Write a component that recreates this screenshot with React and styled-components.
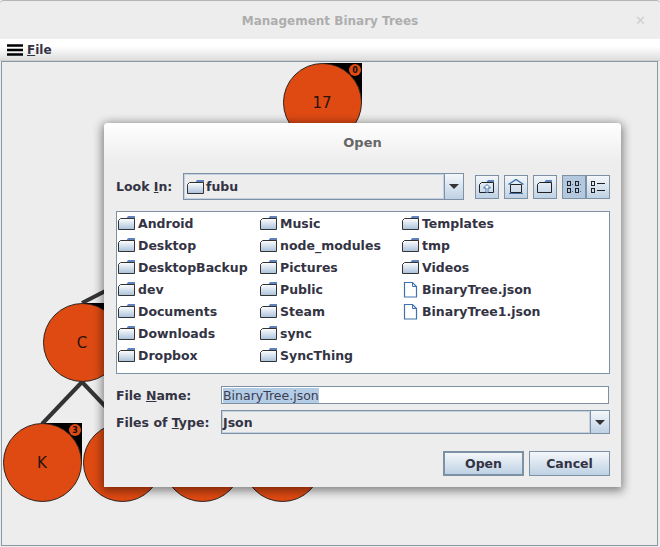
import styled, { createGlobalStyle } from "styled-components";

const GlobalStyle = createGlobalStyle`
  html, body { margin: 0; padding: 0; background: #ededed; }
  * { box-sizing: border-box; }
  body { font-family: "DejaVu Sans", sans-serif; }
`;

const Window = styled.div`
  width: 660px;
  height: 547px;
  display: flex;
  flex-direction: column;
  background: #ededed;
  border-top: 1px solid #b4b4b4;
  border-radius: 4px 4px 0 0;
  overflow: hidden;
  position: relative;
`;

const TitleBar = styled.div`
  height: 38px;
  flex: none;
  display: flex;
  align-items: center;
  justify-content: center;
  position: relative;
  padding-top: 1px;
  font-size: 12px;
  font-weight: bold;
  color: #adadad;
`;

const CloseMark = styled.span`
  position: absolute;
  right: 14px;
  top: 12px;
  font-size: 13px;
  color: #cfcfcf;
`;

const MenuBar = styled.div`
  height: 22px;
  flex: none;
  display: flex;
  align-items: center;
  gap: 4px;
  padding: 0 7px;
  background: linear-gradient(#ffffff 35%, #dedede);
  border-bottom: 1px solid #cfcfcf;
  font-size: 12px;
  font-weight: bold;
  color: #333344;
`;

const Canvas = styled.div`
  flex: 1;
  margin: 0 2px 1px 1px;
  border: 1px solid #8a98a5;
  position: relative;
  background: #ededed;
`;

const Edges = styled.svg`
  position: absolute;
  left: -2px;
  top: -62px;
`;

const Node = styled.div`
  position: absolute;
  left: ${p => p.$x - 2}px;
  top: ${p => p.$y - 62}px;
  width: 79px;
  height: 79px;
`;

const Corner = styled.div`
  position: absolute;
  right: 0;
  top: 0;
  width: 50%;
  height: 50%;
  background: #000;
`;

const Disc = styled.div`
  position: absolute;
  inset: 0;
  border-radius: 50%;
  background: #df4a13;
  border: 1.5px solid #2b2320;
  display: flex;
  align-items: center;
  justify-content: center;
  padding-right: 1px;
  font-size: 15px;
  color: #2a1208;
`;

const Badge = styled.div`
  position: absolute;
  right: 1px;
  top: 1px;
  width: 12px;
  height: 12px;
  border-radius: 50%;
  background: #df4a13;
  color: #111;
  font-size: 8px;
  font-weight: bold;
  display: flex;
  align-items: center;
  justify-content: center;
`;

const Dialog = styled.div`
  position: absolute;
  left: 104px;
  top: 122px;
  width: 517px;
  height: 364px;
  background: #ededed;
  border-radius: 4px 4px 0 0;
  box-shadow: 0 2px 10px 2px rgba(0, 0, 0, 0.45);
  display: flex;
  flex-direction: column;
`;

const DialogTitle = styled.div`
  height: 40px;
  flex: none;
  border-radius: 4px 4px 0 0;
  background: linear-gradient(#ffffff, #ededed);
  display: flex;
  align-items: center;
  justify-content: center;
  padding-bottom: 2px;
  font-size: 13px;
  font-weight: bold;
  color: #666;
`;

const DialogBody = styled.div`
  flex: 1;
  padding: 10px 11px 11px 12px;
  display: flex;
  flex-direction: column;
  font-size: 12.5px;
  font-weight: bold;
  color: #333344;
`;

const LookRow = styled.div`
  display: flex;
  align-items: center;
  height: 27px;
`;

const Label = styled.label`
  flex: none;
  width: ${p => p.$w}px;
`;

const Combo = styled.div`
  display: flex;
  align-items: stretch;
  width: ${p => p.$w}px;
  height: ${p => p.$h}px;
  border: 1px solid #7e90a4;
  background: #ededed;
`;

const ComboValue = styled.div`
  flex: 1;
  display: flex;
  align-items: center;
  gap: 2px;
  padding-left: ${p => p.$pad}px;
  border: 1px solid #c3d2e2;
`;

const ComboArrow = styled.div`
  flex: none;
  width: 19px;
  display: flex;
  align-items: center;
  justify-content: center;
  border-left: 1px solid #7e90a4;
  background: linear-gradient(#f4f7fa, #bed1e4);
  &::after {
    content: "";
    border-left: 5px solid transparent;
    border-right: 5px solid transparent;
    border-top: 5px solid #333;
  }
`;

const Tools = styled.div`
  display: flex;
  margin-left: 11px;
  gap: 5px;
`;

const ToggleGroup = styled.div`
  display: flex;
`;

const ToolButton = styled.div`
  width: 24px;
  height: 24px;
  border: 1px solid #7e90a4;
  display: flex;
  align-items: center;
  justify-content: center;
  background: ${p => (p.$on ? "#b3c8de" : "linear-gradient(#f4f7fa, #bed1e4)")};
`;

const FileList = styled.div`
  margin-top: 11px;
  width: 494px;
  height: 163px;
  border: 1px solid #7e90a4;
  background: #fff;
  display: flex;
`;

const FileColumn = styled.div`
  width: ${p => p.$w}px;
  flex: none;
  display: flex;
  flex-direction: column;
`;

const FileRow = styled.div`
  height: 22px;
  display: flex;
  align-items: center;
  gap: 3px;
  padding-left: 1px;
  white-space: nowrap;
`;

const FormRow = styled.div`
  display: flex;
  align-items: center;
  margin-top: ${p => p.$top}px;
`;

const NameInput = styled.div`
  width: 388px;
  height: 18px;
  border: 1px solid #7e90a4;
  background: #fff;
  padding: 1px 0 0 1px;
  display: flex;
  font-weight: normal;
`;

const Selected = styled.span`
  background: #b3cde6;
  line-height: 15px;
  height: 15px;
  color: #3c3c50;
`;

const Underline = styled.span`
  text-decoration: underline;
`;

const Actions = styled.div`
  display: flex;
  justify-content: flex-end;
  gap: 5px;
  margin-top: 17px;
`;

const Button = styled.div`
  width: 81px;
  height: 25px;
  display: flex;
  align-items: center;
  justify-content: center;
  border: ${p => (p.$primary ? "2px" : "1px")} solid #7e90a4;
  background: linear-gradient(#f4f7fa, #bed1e4);
`;

const Folder = () => (
  <svg width="17" height="14" viewBox="0 0 17 14">
    <defs>
      <linearGradient id="fold" x1="0" y1="0" x2="0" y2="1">
        <stop offset="0" stopColor="#fff" />
        <stop offset="1" stopColor="#a9c1da" />
      </linearGradient>
    </defs>
    <path d="M10 0h7v3H8z" fill="#5f82bd" />
    <path d="M0.5 4.5l2-2h14v11H0.5z" fill="url(#fold)" stroke="#333" />
  </svg>
);

const FileIcon = () => (
  <svg width="17" height="17" viewBox="0 0 17 17">
    <path d="M2.5 1.5h8l4 4v10.5h-12z" fill="#fff" stroke="#3e72ab" strokeWidth="1.2" />
    <path d="M10.5 1.5v4h4" fill="none" stroke="#3e72ab" />
  </svg>
);

const UpIcon = () => (
  <svg width="16" height="13" viewBox="0 0 16 13">
    <path d="M9 0h6v2.500H7z" fill="#5f82bd" />
    <path d="M0.500 4.500l2-2h12v10h-14z" fill="none" stroke="#222" />
    <path d="M8 4.500l-3.500 3.500H7v4.500h2V8h2.500z" fill="#fff" stroke="#3e72ab" />
  </svg>
);

const HomeIcon = () => (
  <svg width="16" height="15" viewBox="0 0 16 15">
    <path d="M0.500 5.500l7.500-5 7.500 5" fill="none" stroke="#3e72ab" strokeWidth="1.500" />
    <path d="M2.500 5.500h11v8h-11z" fill="none" stroke="#222" />
    <path d="M1 14.500h14" stroke="#3e72ab" />
  </svg>
);

const NewFolderIcon = () => (
  <svg width="16" height="13" viewBox="0 0 16 13">
    <path d="M9 0h6v2.500H7z" fill="#5f82bd" />
    <path d="M0.500 4.500l2-2h12v10h-14z" fill="none" stroke="#222" />
  </svg>
);

const ListIcon = () => (
  <svg width="16" height="14" viewBox="0 0 16 14">
    <g fill="none" stroke="#222">
      <rect x="1.500" y="1.500" width="3" height="4" />
      <rect x="9.500" y="1.500" width="3" height="4" />
      <rect x="1.500" y="8.500" width="3" height="4" />
      <rect x="9.500" y="8.500" width="3" height="4" />
    </g>
    <g fill="#3e72ab">
      <rect x="6" y="4" width="1" height="1" />
      <rect x="14" y="4" width="1" height="1" />
      <rect x="6" y="11" width="1" height="1" />
      <rect x="14" y="11" width="1" height="1" />
    </g>
  </svg>
);

const DetailsIcon = () => (
  <svg width="16" height="14" viewBox="0 0 16 14">
    <g fill="none" stroke="#222">
      <rect x="1.500" y="1.500" width="3" height="4" />
      <rect x="1.500" y="8.500" width="3" height="4" />
      <path d="M7 3.500h8M7 10.500h8" />
    </g>
  </svg>
);

const MenuIcon = () => (
  <svg width="16" height="12" viewBox="0 0 16 12">
    <path d="M0 1.500h16M0 6h16M0 10.500h16" stroke="#000" strokeWidth="2.600" />
  </svg>
);

const columns = [
  { w: 142, items: ["Android", "Desktop", "DesktopBackup", "dev", "Documents", "Downloads", "Dropbox"] },
  { w: 142, items: ["Music", "node_modules", "Pictures", "Public", "Steam", "sync", "SyncThing"] },
  { w: 200, items: ["Templates", "tmp", "Videos", "BinaryTree.json", "BinaryTree1.json"] },
];

const nodes = [
  { x: 283, y: 63, label: "17", badge: "0" },
  { x: 243, y: 423, label: "", badge: "" },
  { x: 163, y: 423, label: "", badge: "" },
  { x: 83, y: 423, label: "", badge: "" },
  { x: 43, y: 303, label: "C", badge: "" },
  { x: 3, y: 423, label: "K", badge: "3" },
];

export default function App() {
  return (
    <Window>
      <GlobalStyle />
      <TitleBar>
        Management Binary Trees
        <CloseMark>✕</CloseMark>
      </TitleBar>
      <MenuBar>
        <MenuIcon />
        <span><Underline>F</Underline>ile</span>
      </MenuBar>
      <Canvas>
        <Edges width="660" height="547">
          <g stroke="#333" strokeWidth="4">
            <line x1="82" y1="303" x2="322" y2="180" />
            <line x1="82" y1="382" x2="42" y2="424" />
            <line x1="82" y1="382" x2="122" y2="424" />
          </g>
        </Edges>
        {nodes.map((n, i) => (
          <Node key={i} $x={n.x} $y={n.y}>
            <Corner />
            <Disc>{n.label}</Disc>
            {n.badge && <Badge>{n.badge}</Badge>}
          </Node>
        ))}
      </Canvas>
      <Dialog>
        <DialogTitle>Open</DialogTitle>
        <DialogBody>
          <LookRow>
            <Label $w={67}>Look <Underline>I</Underline>n:</Label>
            <Combo $w={281} $h={27}>
              <ComboValue $pad={2}><Folder />fubu</ComboValue>
              <ComboArrow />
            </Combo>
            <Tools>
              <ToolButton><UpIcon /></ToolButton>
              <ToolButton><HomeIcon /></ToolButton>
              <ToolButton><NewFolderIcon /></ToolButton>
              <ToggleGroup>
                <ToolButton $on><ListIcon /></ToolButton>
                <ToolButton><DetailsIcon /></ToolButton>
              </ToggleGroup>
            </Tools>
          </LookRow>
          <FileList>
            {columns.map(col => (
              <FileColumn key={col.items[0]} $w={col.w}>
                {col.items.map(name => (
                  <FileRow key={name}>
                    {name.endsWith(".json") ? <FileIcon /> : <Folder />}
                    {name}
                  </FileRow>
                ))}
              </FileColumn>
            ))}
          </FileList>
          <FormRow $top={12}>
            <Label $w={105}>File <Underline>N</Underline>ame:</Label>
            <NameInput><Selected>BinaryTree.json</Selected></NameInput>
          </FormRow>
          <FormRow $top={6}>
            <Label $w={105}>Files of <Underline>T</Underline>ype:</Label>
            <Combo $w={389} $h={24}>
              <ComboValue $pad={0}>Json</ComboValue>
              <ComboArrow />
            </Combo>
          </FormRow>
          <Actions>
            <Button $primary>Open</Button>
            <Button>Cancel</Button>
          </Actions>
        </DialogBody>
      </Dialog>
    </Window>
  );
}
